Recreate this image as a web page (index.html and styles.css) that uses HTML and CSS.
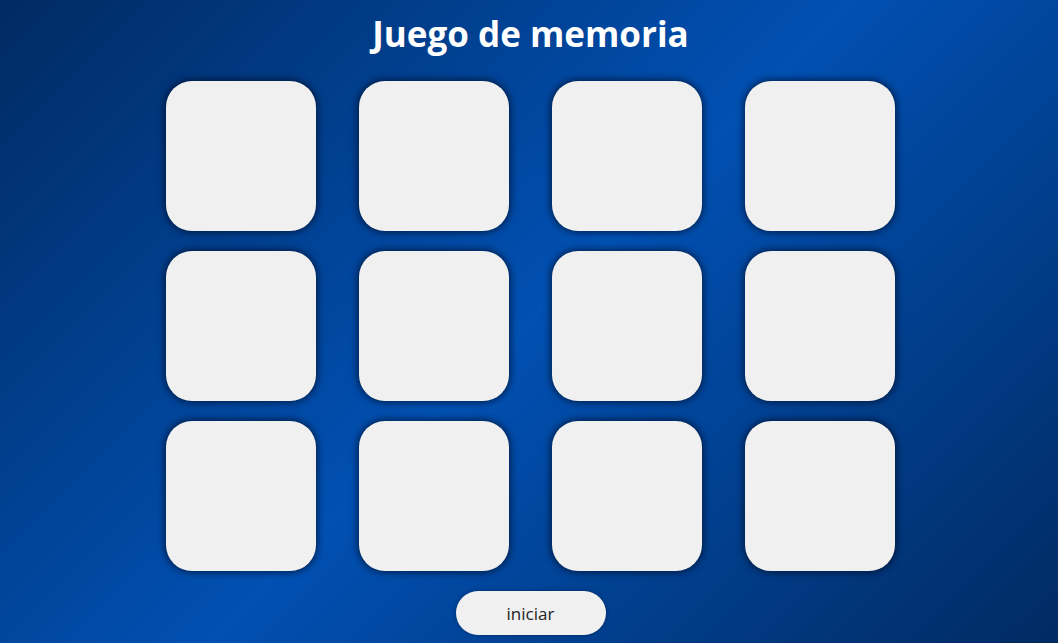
FILE: index.html
```html
<!DOCTYPE html>
<html lang="es">
<head>
<meta charset="utf-8">
<title>Juego de memoria</title>
<link rel="stylesheet" href="styles.css">
</head>
<body>
<main class="game">
  <h1 class="title">Juego de memoria</h1>
  <div class="board">
    <div class="card"></div><div class="card"></div><div class="card"></div><div class="card"></div>
    <div class="card"></div><div class="card"></div><div class="card"></div><div class="card"></div>
    <div class="card"></div><div class="card"></div><div class="card"></div><div class="card"></div>
  </div>
  <button class="start">iniciar</button>
</main>
</body>
</html>
```
FILE: styles.css
```css
html, body {
  margin: 0;
  height: 100%;
}
body {
  background: linear-gradient(135deg, #012a62 0%, #0150b2 50%, #012a62 100%);
  font-family: "Open Sans", "Noto Sans", sans-serif;
  overflow: hidden;
}
.game {
  display: flex;
  flex-direction: column;
  align-items: center;
  padding-top: 12px;
  padding-left: 3px;
}
.title {
  margin: 0;
  color: #ffffff;
  font-size: 35px;
  font-weight: 700;
  line-height: 44px;
  letter-spacing: 0;
}
.board {
  margin-top: 25px;
  display: grid;
  grid-template-columns: repeat(4, 150px);
  grid-auto-rows: 150px;
  column-gap: 43px;
  row-gap: 20px;
}
.card {
  background: #f0f0f0;
  border-radius: 26px;
  box-shadow: 0 0 6px 2px rgba(0, 10, 30, 0.6);
}
.start {
  margin-top: 20px;
  width: 150px;
  height: 44px;
  border: none;
  border-radius: 22px;
  background: #f0f0f0;
  color: #222;
  font-family: "Open Sans", "Noto Sans", sans-serif;
  font-size: 17px;
  box-shadow: 0 0 4px rgba(0, 10, 30, 0.4);
}
```
